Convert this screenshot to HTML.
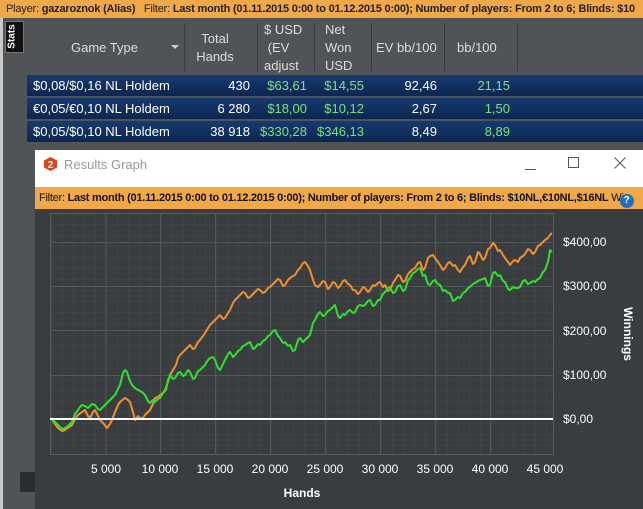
<!DOCTYPE html>
<html><head><meta charset="utf-8"><style>
*{margin:0;padding:0;box-sizing:border-box}
body{width:643px;height:509px;overflow:hidden;background:#505457;font-family:"Liberation Sans","DejaVu Sans",sans-serif;position:relative}
.top{position:absolute;left:0;top:0;width:643px;height:18px;overflow:hidden;background:#f0a848;font-size:11px;line-height:18px;padding-left:6px;white-space:nowrap;color:#222;letter-spacing:-0.2px}
.top b{font-weight:bold}
.strip{position:absolute;left:0;top:18px;width:3px;height:491px;background:#c9c9c9}
.stats{position:absolute;left:5px;top:21px;width:19px;height:32px;background:#111;border:1px solid #777}
.stats span{position:absolute;left:-6px;top:9px;transform:rotate(-90deg);color:#fff;font-size:10px;font-weight:bold}
.hd{position:absolute;top:24px;color:#ddd;font-size:13px;line-height:18px}
.sep{position:absolute;top:23px;width:1px;height:48px;background:#3a3d40}
.row{position:absolute;left:27px;width:616px;height:21px;background:linear-gradient(#163a70,#0c2650);color:#fff;font-size:13px;line-height:21px}
.row span{position:absolute}
.g{color:#7de07d}
.win{position:absolute;left:35px;top:150px;width:608px;height:359px;background:#3a3d40}
.tb{position:absolute;left:0;top:0;width:608px;height:37px;background:#fff}
.fb{position:absolute;left:0;top:37px;width:608px;height:22px;overflow:hidden;background:#f0a848;font-size:11px;line-height:22px;padding-left:4px;white-space:nowrap;color:#111;letter-spacing:-0.25px}
</style></head><body>
<div class="top">Player: <b>gazaroznok (Alias)</b>&nbsp;&nbsp; Filter: <b>Last month (01.11.2015 0:00 to 01.12.2015 0:00); Number of players: From 2 to 6; Blinds: $10</b></div>
<div class="strip"></div>
<div class="stats"><span>Stats</span></div>
<div class="hd" style="left:71px;top:39px">Game Type</div>
<div style="position:absolute;left:171px;top:45px;border-left:4px solid transparent;border-right:4px solid transparent;border-top:4px solid #ccc"></div>
<div class="sep" style="left:184px"></div>
<div class="hd" style="left:195px;top:30px;text-align:center;width:40px">Total<br>Hands</div>
<div class="sep" style="left:257px"></div>
<div class="hd" style="left:264px;top:21px">$ USD<br>&nbsp;(EV<br>adjust</div>
<div class="sep" style="left:314px"></div>
<div class="hd" style="left:325px;top:21px">Net<br>Won<br>USD</div>
<div class="sep" style="left:371px"></div>
<div class="hd" style="left:376px;top:39px">EV bb/100</div>
<div class="sep" style="left:444px"></div>
<div class="hd" style="left:457px;top:39px">bb/100</div>
<div class="sep" style="left:517px"></div>
<div class="row" style="top:75px"><span style="left:6px">$0,08/$0,16 NL Holdem</span><span style="right:393px">430</span><span class="g" style="right:336px">$63,61</span><span class="g" style="right:279px">$14,55</span><span style="right:206px">92,46</span><span class="g" style="right:133px">21,15</span></div>
<div class="row" style="top:98px"><span style="left:6px">€0,05/€0,10 NL Holdem</span><span style="right:393px">6 280</span><span class="g" style="right:336px">$18,00</span><span class="g" style="right:279px">$10,12</span><span style="right:206px">2,67</span><span class="g" style="right:133px">1,50</span></div>
<div class="row" style="top:121px"><span style="left:6px">$0,05/$0,10 NL Holdem</span><span style="right:393px">38 918</span><span class="g" style="right:336px">$330,28</span><span class="g" style="right:279px">$346,13</span><span style="right:206px">8,49</span><span class="g" style="right:133px">8,89</span></div>
<div style="position:absolute;left:20px;top:472px;width:15px;height:20px;background:#2a2c2e"></div>
<div class="win">
<div class="tb">
<svg style="position:absolute;left:9px;top:7px" width="13" height="14" viewBox="0 0 13 14"><polygon points="6.5,0 13,3.5 13,10.5 6.5,14 0,10.5 0,3.5" fill="#e0421c"/><text x="6.5" y="11" font-size="10" font-weight="bold" fill="#fff" text-anchor="middle" font-family="Liberation Sans">2</text></svg>
<div style="position:absolute;left:29px;top:7px;font-size:13px;color:#999">Results Graph</div>
<div style="position:absolute;left:490px;top:19px;width:11px;height:1px;background:#555"></div>
<div style="position:absolute;left:533px;top:7px;width:11px;height:11px;border:1px solid #555"></div>
<svg style="position:absolute;left:579px;top:7px" width="12" height="12"><path d="M0.5 0.5L11.5 11.5M11.5 0.5L0.5 11.5" stroke="#555" stroke-width="1"/></svg>
</div>
<div class="fb">Filter: <b>Last month (01.11.2015 0:00 to 01.12.2015 0:00); Number of players: From 2 to 6; Blinds: $10NL,€10NL,$16NL</b> Wi<span style="display:inline-block;width:14px;height:14px;border-radius:7px;background:#1e6fc8;color:#fff;font-size:10px;line-height:14px;text-align:center;vertical-align:-2px;font-weight:bold;margin-left:-4px">?</span></div>
</div>
<svg style="position:absolute;left:0;top:0" width="643" height="509">
<defs><pattern id="mi" x="51" y="213" width="11" height="11.06" patternUnits="userSpaceOnUse"><path d="M0 0H11M0 0V11.06" stroke="#46494c" stroke-width="1" fill="none"/></pattern></defs>
<rect x="50.5" y="213.5" width="503" height="241" fill="url(#mi)" stroke="#5a5d60"/>
<g stroke="#55585b" stroke-width="1">
<line x1="106" y1="213" x2="106" y2="454"/><line x1="160.5" y1="213" x2="160.5" y2="454"/><line x1="215.5" y1="213" x2="215.5" y2="454"/><line x1="270.5" y1="213" x2="270.5" y2="454"/><line x1="325.5" y1="213" x2="325.5" y2="454"/><line x1="380.5" y1="213" x2="380.5" y2="454"/><line x1="435.5" y1="213" x2="435.5" y2="454"/><line x1="490.5" y1="213" x2="490.5" y2="454"/>
<line x1="50" y1="242.5" x2="553" y2="242.5"/><line x1="50" y1="286.5" x2="553" y2="286.5"/><line x1="50" y1="330.5" x2="553" y2="330.5"/><line x1="50" y1="375.5" x2="553" y2="375.5"/>
</g>
<polyline fill="none" stroke="#f0902c" stroke-width="2" stroke-linejoin="round" points="51,418 55,424 58,428 62,431 65,430 69,427 72,425 75,419 78,415 82,412 85,410 88,416 90,418 93,412 95,410 98,416 100,420 104,424 107,428 110,424 112,420 115,412 118,405 121,401 125,398 128,400 130,402 133,412 135,420 138,416 140,418 143,418 145,415 148,412 150,410 153,404 155,398 158,397 160,395 163,393 165,390 168,382 170,375 173,370 176,365 178,358 180,355 183,352 185,350 188,347 190,345 193,349 195,348 198,342 200,340 203,336 205,333 208,328 210,325 213,322 215,320 218,317 220,315 223,319 225,318 228,313 230,310 233,303 235,300 238,297 240,295 243,292 245,293 248,298 250,297 253,294 255,292 258,289 260,290 263,293 265,292 268,288 270,287 273,284 275,282 278,279 280,280 283,286 285,285 288,280 290,278 293,276 295,275 298,270 300,268 303,263 305,262 308,266 310,270 313,280 315,285 318,287 320,285 323,281 325,282 328,289 330,287 333,282 335,283 338,288 340,286 343,281 345,280 348,284 350,285 353,290 355,290 358,294 360,292 363,287 365,288 368,292 370,290 373,285 375,286 378,283 380,282 383,287 385,285 388,291 390,290 393,283 395,280 398,275 400,276 403,282 405,281 408,274 410,272 413,269 415,268 418,263 420,262 423,270 425,268 428,258 430,256 433,255 435,258 438,262 440,265 443,270 445,268 448,263 450,262 453,266 455,265 458,270 460,272 463,267 465,265 468,258 470,256 473,264 475,262 478,252 480,254 483,260 485,258 488,249 490,248 493,243 495,245 498,251 500,250 503,255 505,258 508,262 510,265 513,261 515,260 518,262 520,258 523,256 525,254 528,249 530,250 533,254 535,252 538,246 540,245 543,242 545,240 548,238 550,235 552,233"/>
<polyline fill="none" stroke="#2ee02e" stroke-width="2" stroke-linejoin="round" points="51,418 55,422 58,425 62,429 65,428 69,425 72,422 75,414 78,410 80,407 82,405 85,406 88,408 92,404 95,405 98,409 100,410 103,407 105,405 108,402 110,400 113,397 115,395 118,389 120,385 123,373 125,370 127,372 128,375 130,381 132,385 135,388 138,390 142,392 145,395 148,401 150,403 153,400 155,402 158,399 160,398 163,393 166,390 168,380 170,375 173,379 175,378 178,373 180,372 183,376 185,375 188,370 190,372 193,379 195,378 198,371 200,370 203,367 205,365 208,360 210,358 213,357 215,360 218,368 220,370 223,364 225,360 228,354 230,352 233,357 235,355 238,351 240,350 243,346 245,345 248,343 250,342 253,349 255,348 258,344 260,345 263,341 265,340 268,336 270,335 273,331 275,330 278,336 280,338 283,343 285,342 288,346 290,345 293,351 295,350 298,340 300,338 303,342 305,340 308,337 310,335 313,323 315,320 318,314 320,312 323,316 325,315 328,311 330,310 333,307 335,305 338,316 340,318 343,314 345,315 348,311 350,310 353,313 355,312 358,306 360,305 363,306 365,305 368,301 370,300 373,306 375,305 378,300 380,300 383,294 385,292 388,288 390,287 393,293 395,292 398,286 400,285 403,291 405,290 408,280 410,278 413,273 415,272 418,269 420,268 423,276 425,275 428,284 430,285 433,281 435,280 438,284 440,285 443,291 445,290 448,293 450,293 453,301 455,300 458,297 460,298 463,293 465,292 468,288 470,287 473,284 475,283 478,281 480,280 483,279 485,278 488,286 490,285 493,273 495,272 498,276 500,275 503,281 505,282 508,289 510,290 513,287 515,288 518,288 520,287 523,281 525,280 528,284 530,283 533,281 535,282 538,279 540,278 543,272 545,270 548,262 550,250 552,252"/>
<line x1="50" y1="419" x2="553" y2="419" stroke="#fff" stroke-width="2"/>
<g fill="#fff" font-size="12" font-family="Liberation Sans">
<text x="563" y="246">$400,00</text><text x="563" y="290">$300,00</text><text x="563" y="335">$200,00</text><text x="563" y="379">$100,00</text><text x="563" y="423">$0,00</text>
<g text-anchor="middle"><text x="106" y="473">5 000</text><text x="160" y="473">10 000</text><text x="215" y="473">15 000</text><text x="270" y="473">20 000</text><text x="325" y="473">25 000</text><text x="380" y="473">30 000</text><text x="435" y="473">35 000</text><text x="490" y="473">40 000</text><text x="545" y="473">45 000</text></g>
<text x="302" y="497" text-anchor="middle" font-weight="bold">Hands</text>
<text x="0" y="0" font-weight="bold" transform="translate(624,334) rotate(90)" text-anchor="middle">Winnings</text>
</g>
</svg>
</body></html>
